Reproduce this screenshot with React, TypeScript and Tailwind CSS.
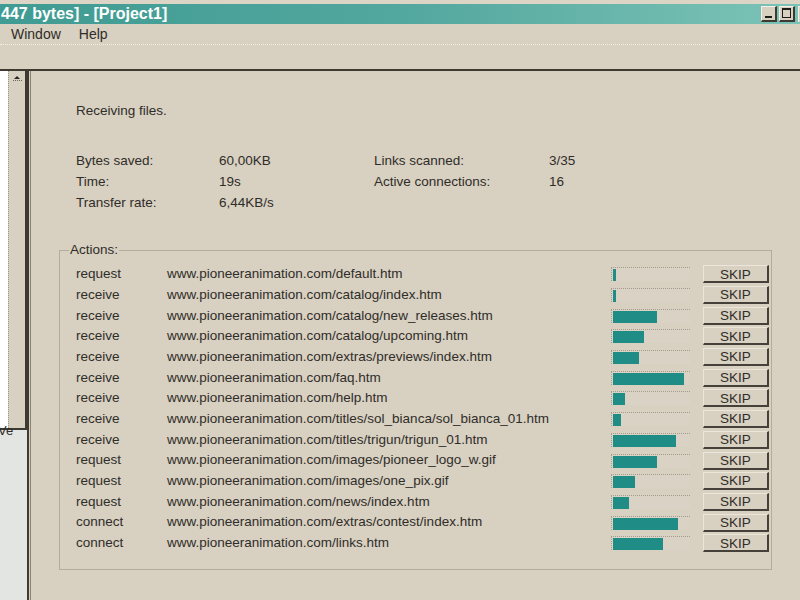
import React from "react";

const rows = [
  { a: "request", u: "www.pioneeranimation.com/default.htm", p: 3 },
  { a: "receive", u: "www.pioneeranimation.com/catalog/index.htm", p: 3 },
  { a: "receive", u: "www.pioneeranimation.com/catalog/new_releases.htm", p: 44 },
  { a: "receive", u: "www.pioneeranimation.com/catalog/upcoming.htm", p: 31 },
  { a: "receive", u: "www.pioneeranimation.com/extras/previews/index.htm", p: 26 },
  { a: "receive", u: "www.pioneeranimation.com/faq.htm", p: 71 },
  { a: "receive", u: "www.pioneeranimation.com/help.htm", p: 12 },
  { a: "receive", u: "www.pioneeranimation.com/titles/sol_bianca/sol_bianca_01.htm", p: 8 },
  { a: "receive", u: "www.pioneeranimation.com/titles/trigun/trigun_01.htm", p: 63 },
  { a: "request", u: "www.pioneeranimation.com/images/pioneer_logo_w.gif", p: 44 },
  { a: "request", u: "www.pioneeranimation.com/images/one_pix.gif", p: 22 },
  { a: "request", u: "www.pioneeranimation.com/news/index.htm", p: 16 },
  { a: "connect", u: "www.pioneeranimation.com/extras/contest/index.htm", p: 65 },
  { a: "connect", u: "www.pioneeranimation.com/links.htm", p: 50 },
];

function TitleButton({ children }: { children: React.ReactNode }) {
  return (
    <div className="relative h-[16px] w-[16px] border-t border-l border-[#f4f0e8] border-r-2 border-b-2 border-r-[#3e3a32] border-b-[#3e3a32] bg-[#d8d0c0]">
      {children}
    </div>
  );
}

export default function App() {
  return (
    <div
      className="flex h-[600px] w-[800px] flex-col overflow-hidden bg-[#d8d0c0] text-[#2f2d2a]"
      style={{ fontFamily: '"Liberation Sans", Arial, sans-serif' }}
    >
      {/* window caption */}
      <div className="h-[4px] bg-[#dcd5c6]" />
      <div className="flex h-[20px] items-center bg-gradient-to-r from-[#3f9b93] via-[#52a79e] to-[#7cc3b7]">
        <span className="flex-1 whitespace-nowrap pl-[1px] text-[16px] font-bold leading-none text-white">
          447 bytes] - [Project1]
        </span>
        <div className="flex gap-[2px]">
          <TitleButton>
            <span className="absolute bottom-[2px] left-[3px] h-[2px] w-[7px] bg-[#1e1c18]" />
          </TitleButton>
          <TitleButton>
            <span className="absolute left-[2px] top-[1px] h-[10px] w-[9px] border border-t-2 border-[#1e1c18]" />
          </TitleButton>
          <div className="ml-[1px] h-[16px] w-[2px] border-t border-l border-[#f4f0e8] bg-[#d8d0c0]" />
        </div>
      </div>

      {/* menu */}
      <div className="flex h-[21px] items-center gap-[18px] border-b border-dotted border-[#f2eee6] pl-[11px] text-[14px]">
        <span>Window</span>
        <span>Help</span>
      </div>
      <div className="h-[24px]" />

      {/* body */}
      <div className="flex flex-1">
        {/* left tree pane */}
        <div className="flex w-[27px] flex-col">
          <div className="flex h-[361px] border-t-2 border-r-2 border-b-2 border-[#3e3a32]">
            <div className="w-[8px] bg-white" />
            <div className="flex flex-1 flex-col items-center border-l border-dotted border-[#9c9484] pt-[5px]">
              <div className="h-0 w-0 border-x-[3px] border-b-[3px] border-x-transparent border-b-[#2a2824]" />
              <div className="mt-[1px] h-[1px] w-[9px] border-t border-dotted border-[#6c6658]" />
            </div>
          </div>
          <div className="relative flex-1 bg-[#e3e5e3]">
            <span className="absolute -left-[2px] -top-[6px] text-[13px] leading-none">Ve</span>
          </div>
        </div>

        {/* main panel */}
        <div className="flex flex-1 flex-col border-t-2 border-l-2 border-[#3e3a32] pl-[1px]">
          <div className="flex flex-1 flex-col border-l border-[#8a8272] pl-[45px] pt-[32px] text-[13.5px]">
            <div className="leading-[16px]">Receiving files.</div>

            <div className="mt-[31px] grid grid-cols-[143px_155px_175px_1fr] leading-[21px]">
              <span>Bytes saved:</span>
              <span>60,00KB</span>
              <span>Links scanned:</span>
              <span>3/35</span>
              <span>Time:</span>
              <span>19s</span>
              <span>Active connections:</span>
              <span>16</span>
              <span>Transfer rate:</span>
              <span>6,44KB/s</span>
            </div>

            <fieldset className="-ml-[17px] mt-[29px] w-[713px] border border-[#b4ac9c] pb-[15px] pl-[16px] pr-[2px]">
              <legend className="-ml-[7px] px-[1px] leading-[16px]">Actions:</legend>
              <div className="pt-[6px]">
                {rows.map((r, i) => (
                  <div key={i} className="flex h-[20.7px] items-center whitespace-nowrap">
                    <span className="w-[91px]">{r.a}</span>
                    <span className="flex-1">{r.u}</span>
                    <div className="h-[14px] w-[79px] border-t border-l border-dotted border-[#a39b8b] bg-[#dad3c5] p-[1px] pb-0">
                      <div className="h-full bg-[#1f8c86]" style={{ width: r.p }} />
                    </div>
                    <button className="ml-[13px] flex h-[18px] w-[66px] items-center justify-center border-t border-l border-[#ece6da] border-r-2 border-b-2 border-r-[#45403a] border-b-[#45403a] pt-[1px] text-[13.5px] leading-none">
                      SKIP
                    </button>
                  </div>
                ))}
              </div>
            </fieldset>
          </div>
        </div>
      </div>
    </div>
  );
}
